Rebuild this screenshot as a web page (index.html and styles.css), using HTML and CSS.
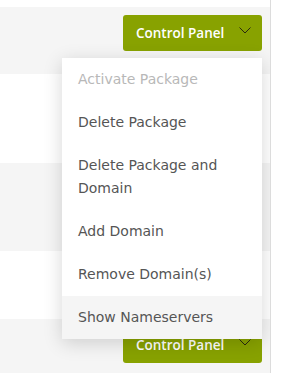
FILE: index.html
```html
<!DOCTYPE html>
<html lang="en">
<head>
  <meta charset="UTF-8">
  <meta name="viewport" content="width=device-width, initial-scale=1.0">
  <title>Packages</title>
  <link rel="stylesheet" href="styles.css">
</head>
<body>
  <div class="page">
    <div class="list">
      <div class="row row-top"></div>

      <div class="row row-alt">
        <div class="actions">
          <button class="btn-panel">
            <span class="btn-label">Control Panel</span>
            <svg class="chevron" width="12" height="7" viewBox="0 0 12 7"><path d="M0.5 0.5 L6 6 L11.5 0.5" fill="none" stroke="#2a2a10" stroke-width="1"/></svg>
          </button>

          <!-- open dropdown menu -->
          <ul class="menu">
            <li class="menu-item disabled">Activate Package</li>
            <li class="menu-item">Delete Package</li>
            <li class="menu-item">Delete Package and Domain</li>
            <li class="menu-item">Add Domain</li>
            <li class="menu-item">Remove Domain(s)</li>
            <li class="menu-item active">Show Nameservers</li>
          </ul>
        </div>
      </div>

      <div class="row row-tall"></div>
      <div class="row row-alt row-tall"></div>
      <div class="row row-mid"></div>

      <div class="row row-alt">
        <div class="actions">
          <button class="btn-panel">
            <span class="btn-label">Control Panel</span>
            <svg class="chevron" width="12" height="7" viewBox="0 0 12 7"><path d="M0.5 0.5 L6 6 L11.5 0.5" fill="none" stroke="#2a2a10" stroke-width="1"/></svg>
          </button>
        </div>
      </div>
    </div>
  </div>
</body>
</html>
```

FILE: styles.css
```css
body {
  margin: 0;
  font-family: "DejaVu Sans", "Open Sans", sans-serif;
  background-color: #fff;
  color: #555;
  overflow: hidden;
}
.page {
  width: 270px;
  height: 373px;
  border-right: 1px solid #dcdcdc;
  overflow: hidden;
}
.row {
  height: 67px;
  padding: 8px 8px 0 0;
  box-sizing: border-box;
  display: flex;
  justify-content: flex-end;
  align-items: flex-start;
  background-color: #fff;
}
.row-top {
  height: 7px;
  padding: 0;
}
.row-alt {
  background-color: #f5f5f5;
}
.row-tall {
  height: 89px;
}
.row-alt.row-tall {
  height: 88px;
}
.row-mid {
  height: 68px;
}
.actions {
  position: relative;
}
.btn-panel {
  width: 139px;
  height: 36px;
  display: flex;
  align-items: center;
  padding: 0 11px 0 13px;
  background-color: #88a200;
  color: #fff;
  border: none;
  border-radius: 3px;
  font-family: "Open Sans", sans-serif;
  font-size: 13.5px;
  font-weight: 600;
  cursor: pointer;
}
.btn-label {
  flex: 1;
  text-align: left;
}
.chevron {
  margin-top: -6px;
}
.menu {
  position: absolute;
  top: 43px;
  right: 0;
  width: 200px;
  margin: 0;
  padding: 0;
  list-style: none;
  background-color: #fff;
  box-shadow: 0 4px 18px rgba(0, 0, 0, 0.16);
  z-index: 10;
}
.menu-item {
  padding: 10px 16px;
  font-size: 14px;
  line-height: 23px;
  color: #555;
}
.menu-item.disabled {
  color: #b8b8b8;
}
.menu-item.active {
  background-color: #f5f5f5;
}
```
